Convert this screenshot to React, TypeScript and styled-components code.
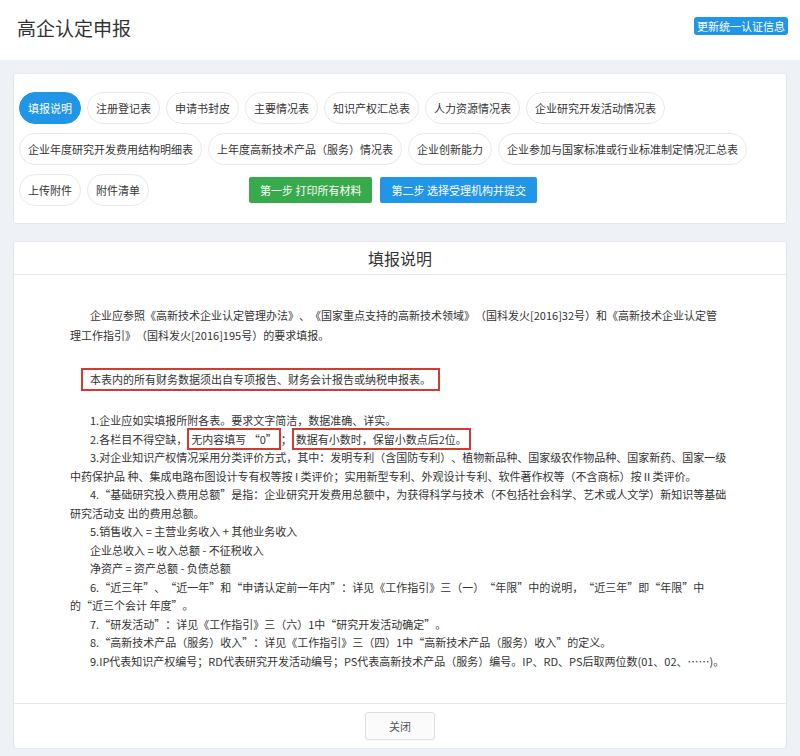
import React from "react";
import styled, { createGlobalStyle } from "styled-components";

const GlobalStyle = createGlobalStyle`
  body {
    margin: 0;
    background-color: #eef1f5;
    font-family: "Noto Sans CJK SC", "Microsoft YaHei", sans-serif;
    color: #333333;
    text-spacing-trim: space-all;
  }
`;

const Page = styled.div`
  display: flex;
  flex-direction: column;
  width: 800px;
  min-height: 756px;
`;

const Header = styled.div`
  display: flex;
  justify-content: space-between;
  align-items: flex-start;
  height: 60px;
  padding: 14px 12px 0 17px;
  box-sizing: border-box;
  background-color: #ffffff;
`;

const Title = styled.h1`
  margin: 0;
  font-size: 19px;
  line-height: 28px;
  font-weight: 400;
  color: #333333;
`;

const UpdateButton = styled.button`
  height: 18px;
  margin-top: 3px;
  padding: 0 3px;
  border: 0;
  border-radius: 3px;
  background-color: #2196e6;
  color: #ffffff;
  font-family: inherit;
  font-size: 11px;
  line-height: 18px;
`;

const Content = styled.div`
  display: flex;
  flex-direction: column;
  gap: 17px;
  padding: 13px 13px 8px 13px;
`;

const Card = styled.div`
  background-color: #ffffff;
  border: 1px solid #e3e7ec;
  border-radius: 3px;
`;

const TabArea = styled.div`
  display: flex;
  flex-direction: column;
  gap: 9px;
  padding: 18px 5px 17px 5px;
`;

const TabRow = styled.div`
  display: flex;
  align-items: center;
  gap: 6px;
`;

const Pill = styled.button<{ $active?: boolean }>`
  height: 32px;
  padding: 0 8px;
  border: 1px solid ${(p) => (p.$active ? "#2196e6" : "#e8e8e8")};
  border-radius: 16px;
  background-color: ${(p) => (p.$active ? "#2196e6" : "#ffffff")};
  color: ${(p) => (p.$active ? "#ffffff" : "#333333")};
  font-family: inherit;
  font-size: 11px;
  white-space: nowrap;
`;

const StepGroup = styled.div`
  display: flex;
  gap: 8px;
  margin-left: 94px;
`;

const StepButton = styled.button<{ $color: string }>`
  height: 26px;
  padding: 0 11px;
  border: 0;
  border-radius: 2px;
  background-color: ${(p) => p.$color};
  color: #ffffff;
  font-family: inherit;
  font-size: 11px;
  white-space: nowrap;
`;

const CardTitle = styled.div`
  height: 32px;
  line-height: 32px;
  text-align: center;
  font-size: 16px;
  color: #333333;
  border-bottom: 1px solid #e6e6e6;
`;

const Body = styled.div`
  padding: 30px 40px 33px 56px;
  font-size: 11px;
  color: #333333;
`;

const Intro = styled.p`
  margin: 0;
  line-height: 20px;
  text-indent: 20px;
`;

const Notice = styled.div`
  display: inline-block;
  margin: 23px 0 0 11px;
  padding: 0 7px;
  line-height: 19px;
  border: 2px solid #d23a35;
  white-space: nowrap;
`;

const List = styled.div`
  margin-top: 20px;
`;

const Item = styled.p`
  margin: 0;
  line-height: 18.5px;
  text-indent: 20px;
  white-space: nowrap;
`;

const Mark = styled.span`
  padding: 1px 2px;
  border: 2px solid #d23a35;
`;

const Footer = styled.div`
  display: flex;
  justify-content: center;
  padding: 8px 0 8px 0;
  border-top: 1px solid #e6e6e6;
`;

const CloseButton = styled.button`
  width: 70px;
  height: 28px;
  border: 1px solid #dedede;
  border-radius: 3px;
  background-color: #fbfbfb;
  color: #555555;
  font-family: inherit;
  font-size: 11px;
`;

const rows = [
  ["填报说明", "注册登记表", "申请书封皮", "主要情况表", "知识产权汇总表", "人力资源情况表", "企业研究开发活动情况表"],
  ["企业年度研究开发费用结构明细表", "上年度高新技术产品（服务）情况表", "企业创新能力", "企业参加与国家标准或行业标准制定情况汇总表"],
];

const App = () => {
  return (
    <Page lang="zh-CN">
      <GlobalStyle />
      <Header>
        <Title>高企认定申报</Title>
        <UpdateButton>更新统一认证信息</UpdateButton>
      </Header>
      <Content>
        <Card>
          <TabArea>
            {rows.map((row, i) => (
              <TabRow key={i}>
                {row.map((name) => (
                  <Pill key={name} $active={name === "填报说明"}>
                    {name}
                  </Pill>
                ))}
              </TabRow>
            ))}
            <TabRow>
              <Pill>上传附件</Pill>
              <Pill>附件清单</Pill>
              <StepGroup>
                <StepButton $color="#37ab4b">第一步 打印所有材料</StepButton>
                <StepButton $color="#2196e6">第二步 选择受理机构并提交</StepButton>
              </StepGroup>
            </TabRow>
          </TabArea>
        </Card>
        <Card>
          <CardTitle>填报说明</CardTitle>
          <Body>
            <Intro>
              企业应参照《高新技术企业认定管理办法》、《国家重点支持的高新技术领域》（国科发火[2016]32号）和《高新技术企业认定管
              <br />
              理工作指引》（国科发火[2016]195号）的要求填报。
            </Intro>
            <Notice>本表内的所有财务数据须出自专项报告、财务会计报告或纳税申报表。</Notice>
            <List>
              <Item>1.企业应如实填报所附各表。要求文字简洁，数据准确、详实。</Item>
              <Item>
                2.各栏目不得空缺，<Mark>无内容填写 “0”</Mark>；<Mark>数据有小数时，保留小数点后2位。</Mark>
              </Item>
              <Item>
                3.对企业知识产权情况采用分类评价方式，其中：发明专利（含国防专利）、植物新品种、国家级农作物品种、国家新药、国家一级
                <br />
                中药保护品 种、集成电路布图设计专有权等按 I 类评价；实用新型专利、外观设计专利、软件著作权等（不含商标）按Ⅱ类评价。
              </Item>
              <Item>
                4.“基础研究投入费用总额”是指：企业研究开发费用总额中，为获得科学与技术（不包括社会科学、艺术或人文学）新知识等基础
                <br />
                研究活动支 出的费用总额。
              </Item>
              <Item>5.销售收入 = 主营业务收入 + 其他业务收入</Item>
              <Item>企业总收入 = 收入总额 - 不征税收入</Item>
              <Item>净资产 = 资产总额 - 负债总额</Item>
              <Item>
                6.“近三年”、“近一年”和“申请认定前一年内”：详见《工作指引》三（一）“年限”中的说明，“近三年”即“年限”中
                <br />
                的“近三个会计 年度”。
              </Item>
              <Item>7.“研发活动”：详见《工作指引》三（六）1中“研究开发活动确定”。</Item>
              <Item>8.“高新技术产品（服务）收入”：详见《工作指引》三（四）1中“高新技术产品（服务）收入”的定义。</Item>
              <Item>9.IP代表知识产权编号；RD代表研究开发活动编号；PS代表高新技术产品（服务）编号。IP、RD、PS后取两位数(01、02、……)。</Item>
            </List>
          </Body>
          <Footer>
            <CloseButton>关闭</CloseButton>
          </Footer>
        </Card>
      </Content>
    </Page>
  );
};

export default App;
